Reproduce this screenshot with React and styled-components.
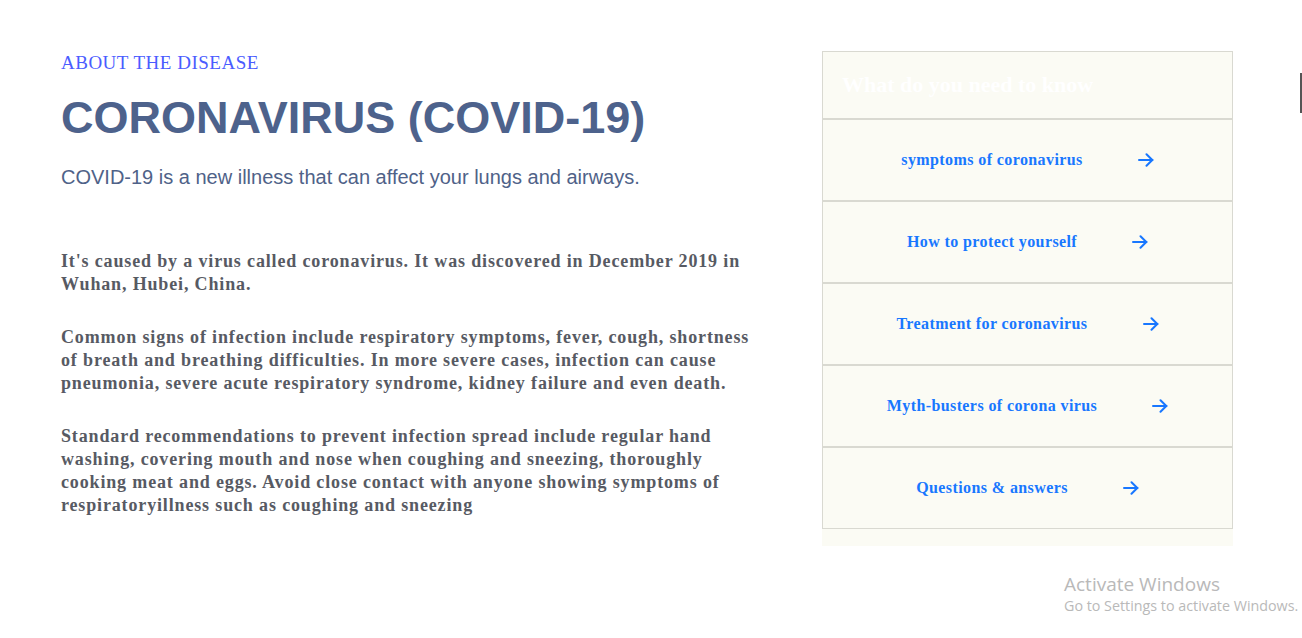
import React from "react";
import styled, { createGlobalStyle } from "styled-components";

const Global = createGlobalStyle`
  html, body { margin: 0; padding: 0; background: #ffffff; }
  body { font-family: "Liberation Serif", "Times New Roman", serif; }
`;

const Page = styled.main`
  position: relative;
  width: 1302px;
  height: 638px;
  overflow: hidden;
  display: flex;
  align-items: flex-start;
  padding: 0 0 0 61px;
  box-sizing: border-box;
`;

const Left = styled.section`
  width: 700px;
  padding-top: 51px;
`;

const Eyebrow = styled.div`
  font-family: "Liberation Serif", "Times New Roman", serif;
  font-size: 19px;
  line-height: 24px;
  color: #4a5cff;
  letter-spacing: 0.5px;
`;

const Title = styled.h1`
  margin: 17px 0 0;
  font-family: "Liberation Sans", Arial, sans-serif;
  font-weight: 700;
  font-size: 45px;
  line-height: 52px;
  color: #4d628c;
`;

const Lead = styled.p`
  margin: 21px 0 0;
  font-family: "Liberation Sans", Arial, sans-serif;
  font-size: 20px;
  line-height: 24px;
  color: #4f6288;
`;

const Body = styled.div`
  margin-top: 61px;
  display: flex;
  flex-direction: column;
  gap: 30px;
  width: 700px;
`;

const Para = styled.p`
  margin: 0;
  font-family: "Liberation Serif", "Times New Roman", serif;
  font-weight: 700;
  font-size: 18px;
  line-height: 23px;
  letter-spacing: 0.85px;
  color: #575a63;
`;

const Card = styled.aside`
  margin: 51px 0 0 61px;
  width: 411px;
  background: #fbfbf4;
  padding-bottom: 17px;
`;

const Box = styled.div`
  border: 1px solid #d9d9d1;
`;

const CardHead = styled.div`
  height: 66px;
  display: flex;
  align-items: center;
  padding-left: 19px;
  font-family: "Liberation Serif", "Times New Roman", serif;
  font-weight: 700;
  font-size: 22px;
  color: #ffffff;
  border-bottom: 1px solid #d9d9d1;
`;

const Row = styled.a`
  box-sizing: border-box;
  display: flex;
  align-items: center;
  justify-content: center;
  gap: 55px;
  height: ${p => (p.$last ? 81 : 82)}px;
  border-top: 1px solid #d9d9d1;
  border-bottom: ${p => (p.$last ? "none" : "1px solid #d9d9d1")};
  font-family: "Liberation Serif", "Times New Roman", serif;
  font-weight: 700;
  font-size: 16px;
  letter-spacing: 0.4px;
  color: #1877ff;
  text-decoration: none;
  padding: 0 0 1px 0;
`;

const Arrow = () => (
  <svg width="16" height="14" viewBox="0 0 16 14" fill="none" stroke="#1877ff" strokeWidth="2" strokeLinecap="round" strokeLinejoin="round">
    <path d="M1 7h13.5" />
    <path d="M8.5 1.2 14.3 7 8.5 12.8" />
  </svg>
);

const Watermark = styled.div`
  position: absolute;
  left: 1064px;
  top: 572px;
  font-family: "Open Sans", "Noto Sans", sans-serif;
  color: #b9b9b9;
`;

const WmTitle = styled.div`
  font-size: 19px;
  line-height: 24px;
`;

const WmSub = styled.div`
  font-size: 14.3px;
  line-height: 20px;
  white-space: nowrap;
`;

const ScrollMark = styled.div`
  position: absolute;
  right: 0;
  top: 73px;
  width: 2px;
  height: 40px;
  background: #555;
`;

const links = [
  "symptoms of coronavirus",
  "How to protect yourself",
  "Treatment for coronavirus",
  "Myth-busters of corona virus",
  "Questions & answers",
];

export default function App() {
  return (
    <>
      <Global />
      <Page>
        <Left>
          <Eyebrow>ABOUT THE DISEASE</Eyebrow>
          <Title>CORONAVIRUS (COVID-19)</Title>
          <Lead>COVID-19 is a new illness that can affect your lungs and airways.</Lead>
          <Body>
            <Para>
              It's caused by a virus called coronavirus. It was discovered in December 2019 in Wuhan, Hubei, China.
            </Para>
            <Para>
              Common signs of infection include respiratory symptoms, fever, cough, shortness of breath and breathing difficulties. In more severe cases, infection can cause pneumonia, severe acute respiratory syndrome, kidney failure and even death.
            </Para>
            <Para>
              Standard recommendations to prevent infection spread include regular hand washing, covering mouth and nose when coughing and sneezing, thoroughly cooking meat and eggs. Avoid close contact with anyone showing symptoms of respiratoryillness such as coughing and sneezing
            </Para>
          </Body>
        </Left>
        <Card>
          <Box>
            <CardHead>What do you need to know</CardHead>
            {links.map((l, i) => (
              <Row key={l} href="#" $last={i === links.length - 1}>
                <span>{l}</span>
                <Arrow />
              </Row>
            ))}
          </Box>
        </Card>
        <ScrollMark />
        <Watermark>
          <WmTitle>Activate Windows</WmTitle>
          <WmSub>Go to Settings to activate Windows.</WmSub>
        </Watermark>
      </Page>
    </>
  );
}
